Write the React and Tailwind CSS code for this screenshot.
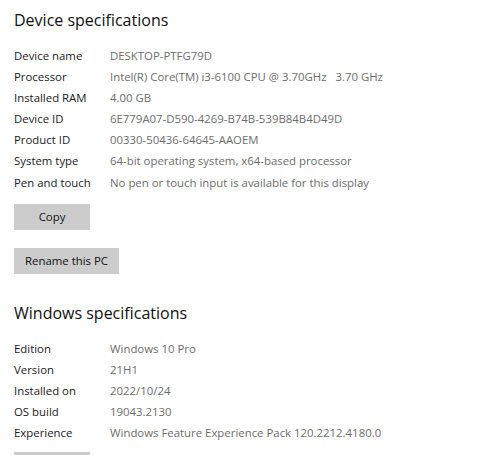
import React from "react";

const device = [
  ["Device name", "DESKTOP-PTFG79D"],
  ["Processor", "Intel(R) Core(TM) i3-6100 CPU @ 3.70GHz   3.70 GHz"],
  ["Installed RAM", "4.00 GB"],
  ["Device ID", "6E779A07-D590-4269-B74B-539B84B4D49D"],
  ["Product ID", "00330-50436-64645-AAOEM"],
  ["System type", "64-bit operating system, x64-based processor"],
  ["Pen and touch", "No pen or touch input is available for this display"],
];

const windows = [
  ["Edition", "Windows 10 Pro"],
  ["Version", "21H1"],
  ["Installed on", "2022/10/24"],
  ["OS build", "19043.2130"],
  ["Experience", "Windows Feature Experience Pack 120.2212.4180.0"],
];

function Rows({ rows }) {
  return (
    <div className="flex flex-col">
      {rows.map(([k, v]) => (
        <div key={k} className="flex h-[21.1px] items-center text-[11.4px]">
          <div className="w-[96px] shrink-0 text-[#1b1b1b]">{k}</div>
          <div className="whitespace-pre text-[#6d6d6d]">{v}</div>
        </div>
      ))}
    </div>
  );
}

export default function App() {
  return (
    <div
      className="h-[455px] w-[500px] overflow-hidden bg-white pl-[14px] pt-[6px]"
      style={{ fontFamily: '"Open Sans", "Noto Sans", sans-serif' }}
    >
      <h1 className="text-[16px] leading-[28px] text-[#111]">Device specifications</h1>
      <div className="mt-[11px]">
        <Rows rows={device} />
      </div>
      <button className="mt-[11px] h-[26px] w-[76px] bg-[#cccccc] text-[11.4px] text-[#111]">Copy</button>
      <div>
        <button className="mt-[18px] h-[26px] w-[105px] bg-[#cccccc] text-[11.4px] text-[#111]">Rename this PC</button>
      </div>
      <h1 className="mt-[25px] text-[16px] leading-[28px] text-[#111]">Windows specifications</h1>
      <div className="mt-[11px]">
        <Rows rows={windows} />
      </div>
      <div className="mt-[9px] h-[26px] w-[76px] bg-[#cccccc]"></div>
    </div>
  );
}
